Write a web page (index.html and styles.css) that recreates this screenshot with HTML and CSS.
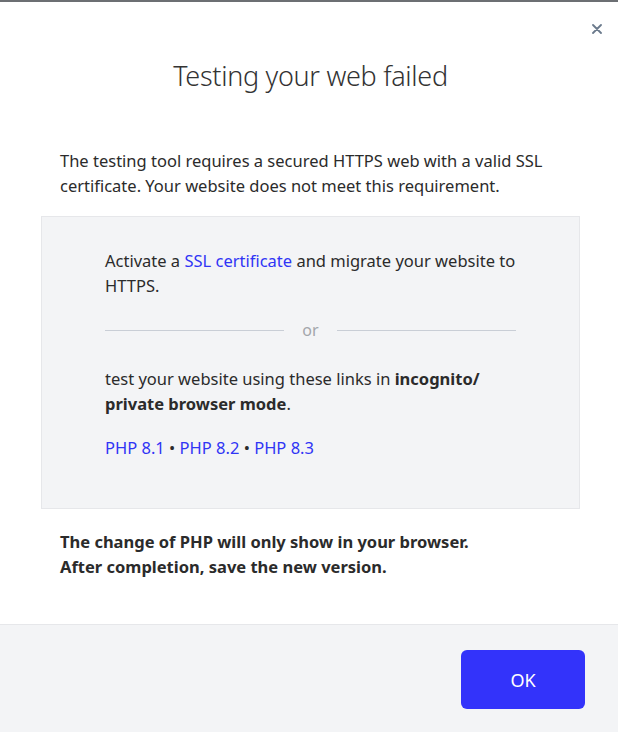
FILE: index.html
```html
<!DOCTYPE html>
<html lang="en">
<head>
<meta charset="utf-8">
<title>Testing your web failed</title>
<link rel="stylesheet" href="styles.css">
</head>
<body>
<div class="dialog">
  <div class="topbar"></div>
  <div class="body">
    <button class="close" aria-label="Close">
      <svg width="10" height="10" viewBox="0 0 10 10"><path d="M1 1L9 9M9 1L1 9" stroke="#6b7a8c" stroke-width="1.8" stroke-linecap="round"/></svg>
    </button>
    <h1 class="title">Testing your web failed</h1>
    <p class="intro">The testing tool requires a secured HTTPS web with a valid SSL certificate. Your website does not meet this requirement.</p>
    <div class="panel">
      <p class="ptext">Activate a <a href="#" class="link">SSL certificate</a> and migrate your website to HTTPS.</p>
      <div class="divider"><span class="line"></span><span class="or">or</span><span class="line"></span></div>
      <p class="ptext">test your website using these links in <b>incognito/ private browser mode</b>.</p>
      <p class="ptext links"><a href="#" class="link">PHP 8.1</a> • <a href="#" class="link">PHP 8.2</a> • <a href="#" class="link">PHP 8.3</a></p>
    </div>
    <p class="note">The change of PHP will only show in your browser.<br>After completion, save the new version.</p>
  </div>
  <div class="footer">
    <button class="ok">OK</button>
  </div>
</div>
</body>
</html>
```
FILE: styles.css
```css
html, body {
  margin: 0;
  padding: 0;
  background: #ffffff;
}
body {
  font-family: "Noto Sans", "Open Sans", Arial, sans-serif;
  color: #2b2b2b;
  font-size: 16.5px;
  line-height: 25px;
}
.dialog {
  width: 618px;
  height: 732px;
  display: flex;
  flex-direction: column;
  overflow: hidden;
}
.topbar {
  height: 2px;
  background: #6c6f73;
  flex: none;
}
.body {
  position: relative;
  flex: 1;
  padding: 0 38px 0 41px;
}
.close {
  position: absolute;
  top: 21px;
  right: 15px;
  width: 12px;
  height: 12px;
  padding: 0;
  border: 0;
  background: none;
  display: flex;
  align-items: center;
  justify-content: center;
}
.title {
  margin: 52px 0 0;
  text-align: center;
  font-size: 27px;
  line-height: 44px;
  font-weight: 300;
  color: #333333;
  letter-spacing: -0.3px;
}
.intro {
  margin: 50px 0 0;
  padding-left: 19px;
  padding-right: 4px;
}
.panel {
  margin-top: 18px;
  background: #f3f4f6;
  border: 1px solid #e6e7ea;
  padding: 31px 58px 48px 63px;
}
.ptext {
  margin: 0;
}
.link {
  color: #3035f5;
  text-decoration: none;
}
.divider {
  display: flex;
  align-items: center;
  gap: 18px;
  margin: 20px 5px 23px 0;
  height: 25px;
}
.line {
  flex: 1;
  height: 1px;
  background: #c9ced6;
}
.or {
  color: #a3a6ab;
  font-size: 16px;
}
.links {
  margin-top: 19px;
}
.note {
  margin: 20px 0 0;
  padding-left: 19px;
  font-weight: 700;
}
.footer {
  flex: none;
  height: 108px;
  background: #f3f4f6;
  border-top: 1px solid #e6e7ea;
  display: flex;
  justify-content: flex-end;
  align-items: flex-start;
  padding: 25px 33px 0 0;
  box-sizing: border-box;
}
.ok {
  width: 124px;
  height: 59px;
  border: 0;
  border-radius: 6px;
  background: #3333fa;
  color: #ffffff;
  font-family: "Noto Sans", "Open Sans", Arial, sans-serif;
  font-size: 18px;
}
```
